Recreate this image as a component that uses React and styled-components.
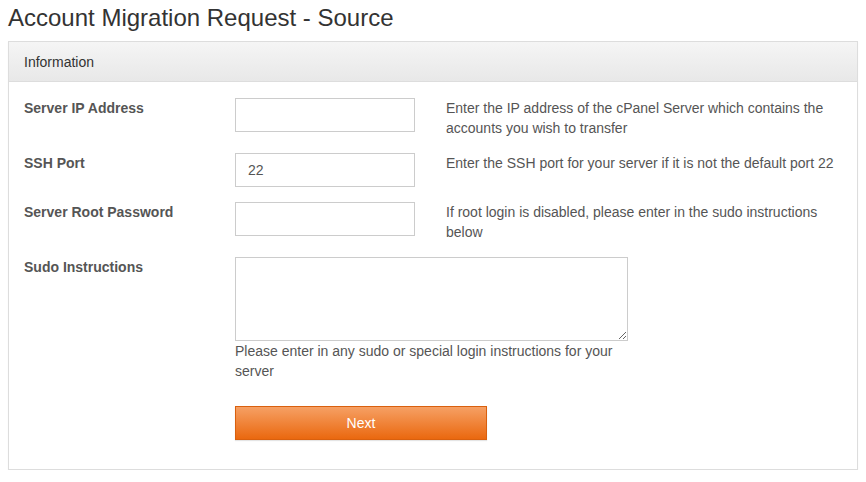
import React from 'react';
import styled, { createGlobalStyle } from 'styled-components';

const GlobalStyle = createGlobalStyle`
  body {
    margin: 0;
    padding: 0 8px;
    background: #fff;
    font-family: "Liberation Sans", Arial, sans-serif;
    color: #333;
  }
`;

const Title = styled.h1`
  margin: 0;
  padding-top: 4px;
  height: 37px;
  font-size: 24px;
  font-weight: normal;
  line-height: 28px;
  color: #333;
`;

const Panel = styled.section`
  border: 1px solid #ddd;
  box-shadow: 0 1px 1px rgba(0, 0, 0, 0.05);
`;

const PanelHeading = styled.div`
  height: 40px;
  box-sizing: border-box;
  padding: 0 15px;
  display: flex;
  align-items: center;
  font-size: 14px;
  color: #333;
  background: linear-gradient(to bottom, #f5f5f5, #e8e8e8);
  border-bottom: 1px solid #ddd;
`;

const PanelBody = styled.div`
  padding: 16px 15px 29px;
`;

const Row = styled.div`
  display: grid;
  grid-template-columns: 211px 211px 1fr;
  align-items: start;
  margin-bottom: ${p => p.gap ?? 15}px;
`;

const Label = styled.label`
  font-size: 14px;
  font-weight: bold;
  color: #555;
  line-height: 20px;
`;

const Input = styled.input`
  width: 180px;
  height: 34px;
  box-sizing: border-box;
  padding: 0 12px;
  border: 1px solid #ccc;
  font-family: inherit;
  font-size: 14px;
  color: #555;
  outline: none;
`;

const Help = styled.div`
  font-size: 14px;
  line-height: 20px;
  color: #555;
  max-width: ${p => p.max || 'none'};
`;

const Stack = styled.div`
  grid-column: 2 / span 2;
  display: flex;
  flex-direction: column;
`;

const TextArea = styled.textarea`
  display: block;
  width: 393px;
  height: 84px;
  box-sizing: border-box;
  border: 1px solid #ccc;
  margin: 0;
  resize: vertical;
  font-family: inherit;
  font-size: 14px;
  outline: none;
`;

const Button = styled.button`
  width: 252px;
  height: 34px;
  border: 1px solid #d9600e;
  background: linear-gradient(to bottom, #f6a064, #ea680f);
  color: #fff;
  font-family: inherit;
  font-size: 14px;
  cursor: pointer;
  box-shadow: 0 1px 1px rgba(0, 0, 0, 0.1);
`;

const fields = [
  { label: 'Server IP Address', value: '', help: 'Enter the IP address of the cPanel Server which contains the accounts you wish to transfer', max: '390px' },
  { label: 'SSH Port', value: '22', help: 'Enter the SSH port for your server if it is not the default port 22' },
  { label: 'Server Root Password', value: '', help: 'If root login is disabled, please enter in the sudo instructions below', type: 'password', max: '390px' },
];

export default function App() {
  return (
    <>
      <GlobalStyle />
      <Title>Account Migration Request - Source</Title>
      <Panel>
        <PanelHeading>Information</PanelHeading>
        <PanelBody>
          {fields.map(f => (
            <Row key={f.label}>
              <Label>{f.label}</Label>
              <Input type={f.type || 'text'} defaultValue={f.value} />
              <Help max={f.max}>{f.help}</Help>
            </Row>
          ))}
          <Row gap={25}>
            <Label>Sudo Instructions</Label>
            <Stack>
              <TextArea />
              <Help max="393px">Please enter in any sudo or special login instructions for your server</Help>
            </Stack>
          </Row>
          <Row gap={0}>
            <span />
            <Button>Next</Button>
          </Row>
        </PanelBody>
      </Panel>
    </>
  );
}
